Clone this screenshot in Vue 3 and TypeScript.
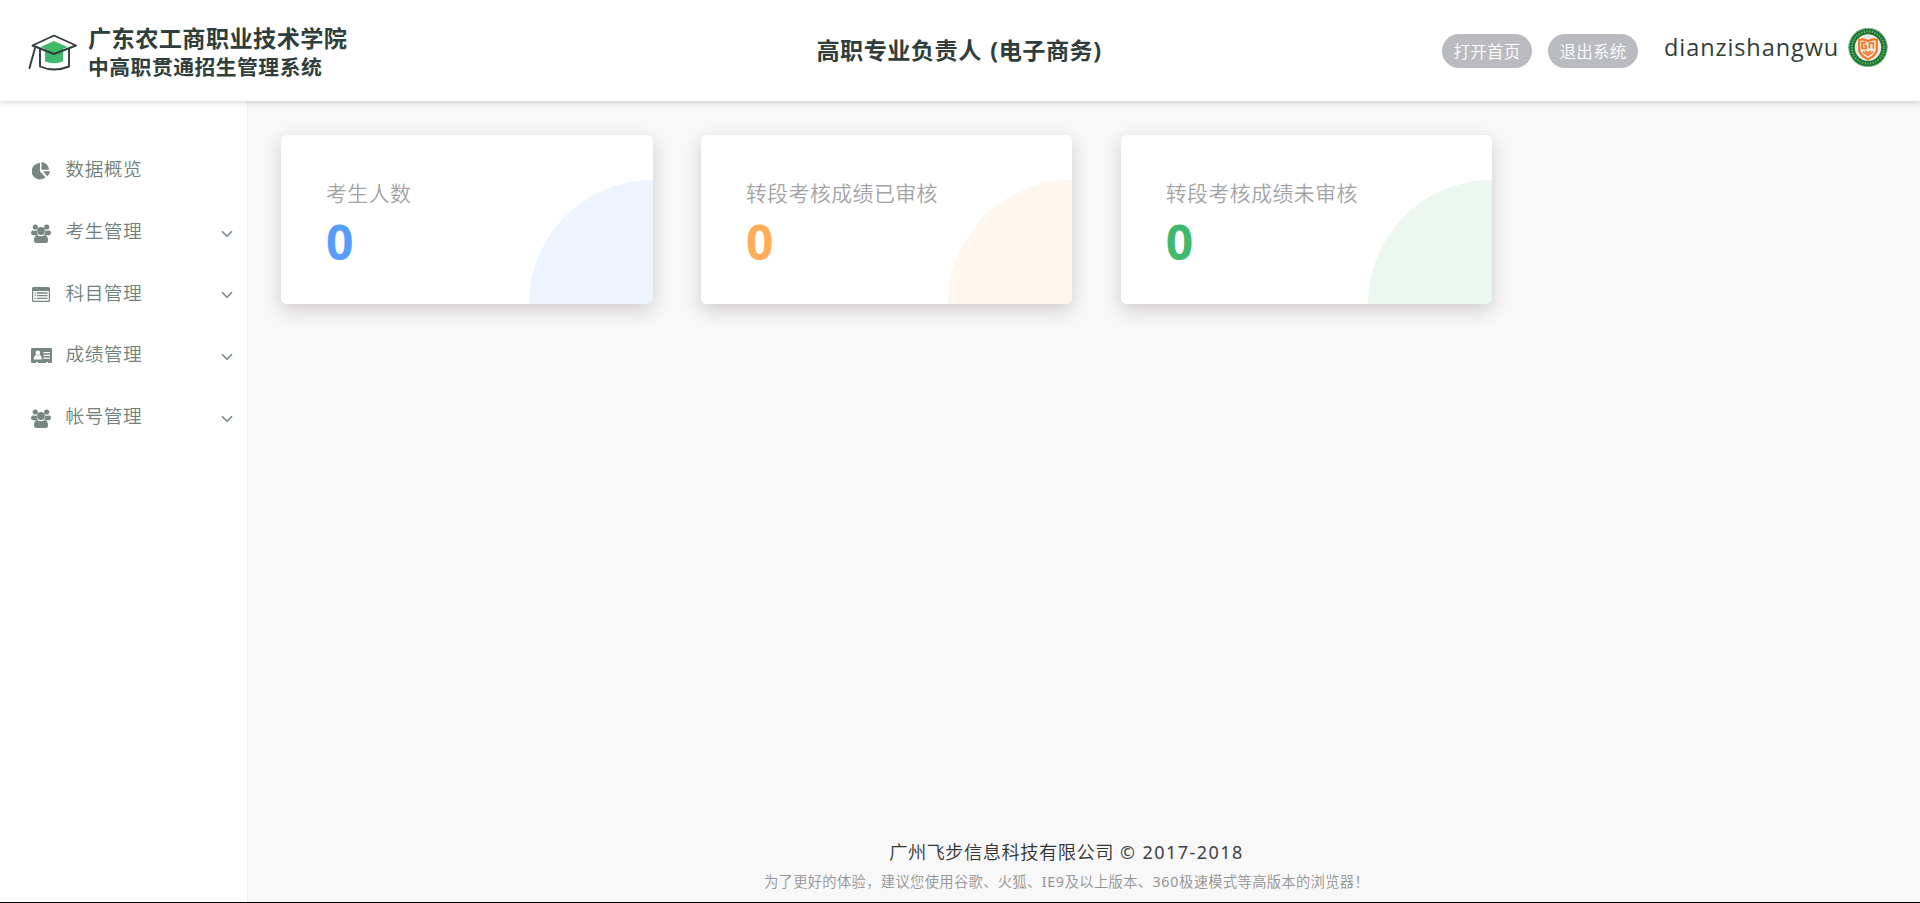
<script setup lang="ts">
type IconName = 'pie' | 'users' | 'list' | 'card'

interface MenuItem {
  label: string
  icon: IconName
  expandable: boolean
}

interface Stat {
  label: string
  value: number
  tone: string
}

const menu: MenuItem[] = [
  { label: '数据概览', icon: 'pie', expandable: false },
  { label: '考生管理', icon: 'users', expandable: true },
  { label: '科目管理', icon: 'list', expandable: true },
  { label: '成绩管理', icon: 'card', expandable: true },
  { label: '帐号管理', icon: 'users', expandable: true },
]

const stats: Stat[] = [
  { label: '考生人数', value: 0, tone: 'blue' },
  { label: '转段考核成绩已审核', value: 0, tone: 'orange' },
  { label: '转段考核成绩未审核', value: 0, tone: 'green' },
]
</script>

<template>
  <div class="page">
    <header class="header">
      <div class="brand">
        <svg class="logo" width="52" height="38" viewBox="0 0 52 38" fill="none">
          <path d="M17 15 26 7.500 35 15v12.500q-9 3.500-18 0z" fill="#41b96b" />
          <path d="M12.500 13 26 7 39.500 13 26 19z" fill="#41b96b" />
          <path d="M12 14.500V32.500q14 6 29 0V14.500" stroke="#303e3b" stroke-width="1.900" stroke-linejoin="round" />
          <path d="M4.500 11.500 26 1.500l22 10L26 20z" stroke="#303e3b" stroke-width="1.900" stroke-linejoin="round" />
          <path d="M7 14 1.500 34" stroke="#303e3b" stroke-width="1.900" stroke-linecap="round" />
        </svg>
        <div class="names">
          <div class="school">广东农工商职业技术学院</div>
          <div class="system">中高职贯通招生管理系统</div>
        </div>
      </div>
      <h1 class="title">高职专业负责人 (电子商务)</h1>
      <div class="account">
        <button class="pill" type="button">打开首页</button>
        <button class="pill" type="button">退出系统</button>
        <span class="user">dianzishangwu</span>
        <svg class="avatar" width="40" height="41" viewBox="0 0 41 41" fill="none">
          <circle cx="20.500" cy="20.500" r="20" fill="#18752b" />
          <circle cx="20.500" cy="20.500" r="19.600" stroke="#9bc7a3" stroke-width="0.800" />
          <circle cx="20.500" cy="20.500" r="16.500" stroke="#d5e7d8" stroke-width="2.200" stroke-dasharray="1.300 1.500" opacity="0.500" />
          <circle cx="20.500" cy="20.500" r="13.600" fill="#e9eae6" />
          <path d="M11.500 12.500q5-1 9 1.500 4-2.500 9-1.500v11.500q-2.500 6-9 8.500-6.500-2.500-9-8.500z" stroke="#f8741f" stroke-width="2.200" />
          <path d="M18.500 15.500h-4v6h4v-3h-2M22 15v6.500M22 16h4v5.500M15 25l5.500 3.500 5.500-3.500M17.500 24l3 2 3-2" stroke="#f8741f" stroke-width="1.700" />
        </svg>
      </div>
    </header>

    <div class="body">
      <nav class="sidebar">
        <a v-for="item in menu" :key="item.label" class="item">
          <span class="item-icon">
            <svg v-if="item.icon === 'pie'" width="18" height="18" viewBox="0 0 18 18" fill="currentColor">
              <path d="M8 1v8.500l5.500 5.700A8.200 8.200 0 1 1 8 1z" />
              <path d="M9.500 0a8 8 0 0 1 7.500 7.700H9.500z" />
              <path d="M11 9.200h7a8 8 0 0 1-2.700 5z" />
            </svg>
            <svg v-else-if="item.icon === 'users'" width="20" height="19" viewBox="0 0 20 19" fill="currentColor">
              <circle cx="4.300" cy="3" r="2.600" />
              <circle cx="15.700" cy="3" r="2.600" />
              <path d="M2 6.300q2 1 4 .1-.6 2.300.8 4.100-1.200.8-2 .800H2Q0 11 0 9q0-2 2-2.700zM18 6.300q-2 1-4 .1.600 2.300-.8 4.100 1.200.8 2 .800H18q2-.3 2-2.300 0-2-2-2.700z" />
              <circle cx="10" cy="7" r="3.900" />
              <path d="M6.200 11q3.800 2.400 7.600 0Q17 11.500 17 16.500q0 2.500-2.500 2.500h-9Q3 19 3 16.500 3 11.500 6.200 11z" />
            </svg>
            <svg v-else-if="item.icon === 'list'" width="18" height="15" viewBox="0 0 18 15">
              <path fill="currentColor" fill-rule="evenodd" d="M1.500 0h15Q18 0 18 1.500v12q0 1.500-1.500 1.500h-15Q0 15 0 13.500v-12Q0 0 1.500 0zM1.200 4v9q0 .8.800.8h14q.8 0 .8-.8V4z" />
              <path d="M2.500 6h1.200M5 6h10.500M2.500 8.700h1.200M5 8.700h10.500M2.500 11.400h1.200M5 11.400h10.500" stroke="currentColor" stroke-width="1.300" />
            </svg>
            <svg v-else width="21" height="16" viewBox="0 0 21 16">
              <path fill="currentColor" d="M1.300 0h18.400Q21 0 21 1.300v12.400q0 1.300-1.300 1.300H17v-1h-2v1H7v-1H5v1H1.300Q0 15 0 13.700V1.300Q0 0 1.300 0z" />
              <circle cx="6.800" cy="5" r="2.400" fill="#fff" />
              <path d="M5 7q1.800 1.300 3.600 0 2.200.5 2.200 4.500H2.800Q2.800 7.500 5 7zM12.500 4H19v1.200h-6.500zM12.500 6.800H19V8h-6.500zM12.500 9.600H19v1.200h-6.500z" fill="#fff" />
            </svg>
          </span>
          <span class="item-label">{{ item.label }}</span>
          <svg v-if="item.expandable" class="chevron" width="12" height="8" viewBox="0 0 12 8" fill="none">
            <path d="M1 1.200 6 6.200l5-5" stroke="currentColor" stroke-width="1.600" />
          </svg>
        </a>
      </nav>

      <main class="content">
        <section class="cards">
          <article v-for="stat in stats" :key="stat.label" class="card" :class="stat.tone">
            <div class="card-label">{{ stat.label }}</div>
            <div class="card-value">{{ stat.value }}</div>
          </article>
        </section>
        <footer class="footer">
          <div class="copyright">广州飞步信息科技有限公司<span class="years"> © 2017-2018</span></div>
          <div class="advice">为了更好的体验，建议您使用谷歌、火狐、<span class="latin">IE9</span>及以上版本、<span class="latin">360</span>极速模式等高版本的浏览器！</div>
        </footer>
      </main>
    </div>
  </div>
</template>

<style>
body {
  overflow: hidden;
}
</style>

<style scoped>
.page {
  box-sizing: border-box;
  display: flex;
  flex-direction: column;
  height: 903px;
  border-bottom: 1px solid #000;
  background: #f8f8f8;
  color: #303e3b;
  font-family: 'Open Sans', 'Noto Sans CJK SC', sans-serif;
  white-space: nowrap;
}

.header {
  position: relative;
  z-index: 1;
  display: grid;
  grid-template-columns: 1fr auto 1fr;
  flex: none;
  height: 101px;
  background: #fff;
  box-shadow: 0 1px 6px rgba(0, 0, 0, 0.2);
}

.brand {
  display: flex;
  align-items: flex-start;
  padding-left: 28px;
}

.logo {
  margin-top: 34px;
}

.names {
  margin: 24px 0 0 8px;
  font-weight: 700;
}

.school {
  font-size: 23.200px;
  letter-spacing: 0.400px;
  line-height: 29px;
}

.system {
  padding-top: 1px;
  font-size: 20.800px;
  letter-spacing: 0.500px;
  line-height: 26px;
}

.title {
  margin: 0;
  padding-right: 2px;
  font-size: 23.200px;
  font-weight: 700;
  letter-spacing: 0.450px;
  word-spacing: 2px;
  line-height: 100px;
}

.account {
  display: flex;
  justify-content: flex-end;
  padding-right: 32px;
}

.pill {
  width: 90px;
  height: 34px;
  margin: 34px 16px 0 0;
  padding: 0;
  border: 0;
  border-radius: 17px;
  background: #babbc0;
  color: #fff;
  font-family: inherit;
  font-size: 16.500px;
  font-weight: 350;
  letter-spacing: 0.300px;
  line-height: 35px;
}

.user {
  width: 174px;
  margin: 27px 10px 0 10px;
  font-size: 23.500px;
  letter-spacing: 0.920px;
  line-height: 40px;
}

.avatar {
  margin-top: 27px;
}

.body {
  display: flex;
  flex: 1;
}

.sidebar {
  box-sizing: border-box;
  width: 248px;
  padding-top: 38px;
  border-right: 1px solid #f0f0f0;
  background: #fff;
  color: #76877f;
}

.item {
  display: flex;
  align-items: center;
  height: 61.700px;
  padding: 0 14px 0 30px;
}

.item-icon {
  display: flex;
  justify-content: center;
  width: 22px;
  margin-top: 3px;
}

.item-label {
  flex: 1;
  margin: -4px 0 0 13.500px;
  color: #70817a;
  font-size: 18.700px;
  font-weight: 350;
  letter-spacing: 0.500px;
}

.chevron {
  margin-top: 4px;
}

.content {
  display: flex;
  flex: 1;
  flex-direction: column;
  justify-content: space-between;
}

.cards {
  display: flex;
  gap: 48.300px;
  padding: 34px 0 0 33px;
}

.card {
  box-sizing: border-box;
  width: 371.600px;
  height: 169px;
  padding: 42px 0 0 45px;
  border-radius: 6px;
  background: radial-gradient(circle at 100% 100%, var(--tint) 123.500px, #fff 124.500px);
  box-shadow: 0 6px 18px rgba(50, 30, 30, 0.200);
}

.blue {
  --tone: #579dff;
  --tint: #edf4ff;
}

.orange {
  --tone: #ffae57;
  --tint: #fff6ed;
}

.green {
  --tone: #41b96b;
  --tint: #ecf7f0;
}

.card-label {
  color: #a3a3a3;
  font-size: 20.900px;
  font-weight: 350;
  letter-spacing: 0.450px;
  line-height: 32px;
}

.card-value {
  padding-top: 1px;
  color: var(--tone);
  font-size: 48px;
  font-weight: 700;
  line-height: 64px;
}

.footer {
  padding: 0 0 7px;
  text-align: center;
}

.copyright {
  padding-right: 35px;
  color: #333;
  font-size: 18.300px;
  font-weight: 350;
  letter-spacing: 0.450px;
  line-height: 34px;
}

.years {
  color: #404040;
  font-family: 'Noto Sans', sans-serif;
  font-size: 18px;
  font-weight: 400;
  letter-spacing: 1.450px;
}

.advice {
  padding-right: 35px;
  color: #949494;
  font-size: 14.300px;
  font-weight: 350;
  letter-spacing: 0.320px;
  line-height: 26px;
}

.latin {
  font-family: 'Noto Sans', sans-serif;
  font-weight: 400;
  letter-spacing: 0.700px;
}
</style>
